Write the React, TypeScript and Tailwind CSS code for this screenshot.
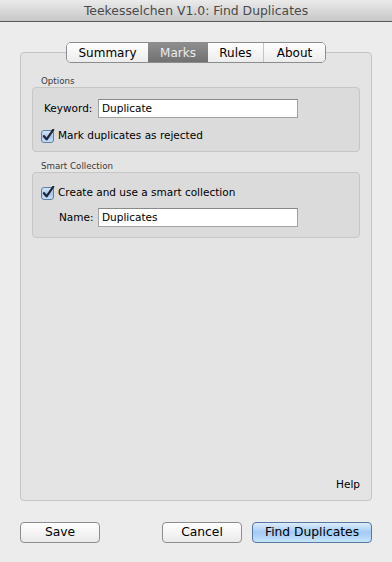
import React from "react";

const font = "font-['DejaVu_Sans',Verdana,sans-serif]";

const Check = () => (
  <svg width="14" height="14" viewBox="0 0 14 14" className="shrink-0">
    <defs>
      <linearGradient id="cb" x1="0" y1="0" x2="0" y2="1">
        <stop offset="0" stopColor="#dbe8f7" />
        <stop offset="0.5" stopColor="#a9c7ea" />
        <stop offset="1" stopColor="#c9e0f8" />
      </linearGradient>
    </defs>
    <rect x="0.5" y="1.5" width="12" height="12" rx="2.5" fill="url(#cb)" stroke="#5f7ea6" />
    <path d="M3 7.2 L5.6 10.4 L12.2 0.8" fill="none" stroke="#1c2536" strokeWidth="2.2" strokeLinecap="round" strokeLinejoin="round" />
  </svg>
);

const Field = ({ value }: { value: string }) => (
  <div className="w-[200px] h-[19px] bg-white border border-[#a3a3a3] border-t-[#8a8a8a] flex items-center pl-[3px] text-[10.5px] text-black">
    {value}
  </div>
);

const Button = ({ label, w, primary }: { label: string; w: string; primary?: boolean }) => (
  <div
    className={`${w} h-[21px] rounded-[4px] border flex items-center justify-center text-[12.3px] text-black ${
      primary
        ? "border-[#5877a4] bg-linear-to-b from-[#dcecfc] via-[#a3cbf5] to-[#c6e4fd]"
        : "border-[#8e8e8e] bg-linear-to-b from-[#ffffff] to-[#e9e9e9]"
    }`}
  >
    {label}
  </div>
);

export default function App() {
  const tabs = [
    { name: "Summary", w: "w-[81px]" },
    { name: "Marks", w: "w-[60px]", on: true },
    { name: "Rules", w: "w-[56px] border-r border-[#c4c4c4]" },
    { name: "About", w: "w-[61px]" },
  ];

  return (
    <div className={`w-[392px] h-[562px] bg-[#ececec] flex flex-col ${font}`}>
      {/* title bar */}
      <div className="h-[22px] shrink-0 border-b border-[#575757] bg-linear-to-b from-[#ebebeb] to-[#c7c7c7] flex items-center justify-center pt-[2px] text-[12.4px] text-[#4a4a4a]">
        Teekesselchen V1.0: Find Duplicates
      </div>

      {/* tab view */}
      <div className="relative mx-[20px] mt-[30px] h-[449px] rounded-[4px] border border-[#c4c4c4] bg-[#e4e4e4] flex flex-col px-[11px] pt-[23px]">
        <div className="absolute left-1/2 -translate-x-1/2 -top-[11px] flex h-[21px] rounded-[5px] border border-[#8c8c8c] overflow-hidden">
          {tabs.map(t => (
            <div
              key={t.name}
              className={`${t.w} h-full flex items-center justify-center text-[12px] ${
                t.on
                  ? "bg-linear-to-b from-[#8e8e8e] to-[#717171] text-[#ececec]"
                  : "bg-linear-to-b from-[#ffffff] to-[#ececec] text-black"
              }`}
            >
              {t.name}
            </div>
          ))}
        </div>

        {/* options */}
        <div className="pl-[9px] text-[8.7px] leading-[11px] text-[#3a3a3a]">Options</div>
        <div className="h-[65px] rounded-[4px] border border-[#c6c6c6] bg-[#dbdbdb] flex flex-col pt-[11px] px-[11px]">
          <div className="flex items-center">
            <span className="w-[54px] text-[10.5px] text-black">Keyword:</span>
            <Field value="Duplicate" />
          </div>
          <div className="flex items-center mt-[10px] h-[16px] -ml-[3px] gap-[3px]">
            <Check />
            <span className="text-[10.5px] text-black">Mark duplicates as rejected</span>
          </div>
        </div>

        {/* smart collection */}
        <div className="pl-[9px] mt-[9px] text-[8.7px] leading-[11px] text-[#3a3a3a]">Smart Collection</div>
        <div className="h-[66px] rounded-[4px] border border-[#c6c6c6] bg-[#dbdbdb] flex flex-col pt-[12px] px-[8px]">
          <div className="flex items-center h-[16px] gap-[3px]">
            <Check />
            <span className="text-[10.5px] text-black">Create and use a smart collection</span>
          </div>
          <div className="flex items-center mt-[7px]">
            <span className="w-[57px] pl-[18px] text-[10.5px] text-black">Name:</span>
            <Field value="Duplicates" />
          </div>
        </div>

        <div className="mt-auto mb-[9px] self-end text-[10.5px] leading-[14px] text-black">Help</div>
      </div>

      {/* buttons */}
      <div className="mx-[20px] mt-[21px] flex items-center">
        <Button label="Save" w="w-[80px]" />
        <div className="ml-auto flex gap-[10px]">
          <Button label="Cancel" w="w-[80px]" />
          <Button label="Find Duplicates" w="w-[120px]" primary />
        </div>
      </div>
    </div>
  );
}
